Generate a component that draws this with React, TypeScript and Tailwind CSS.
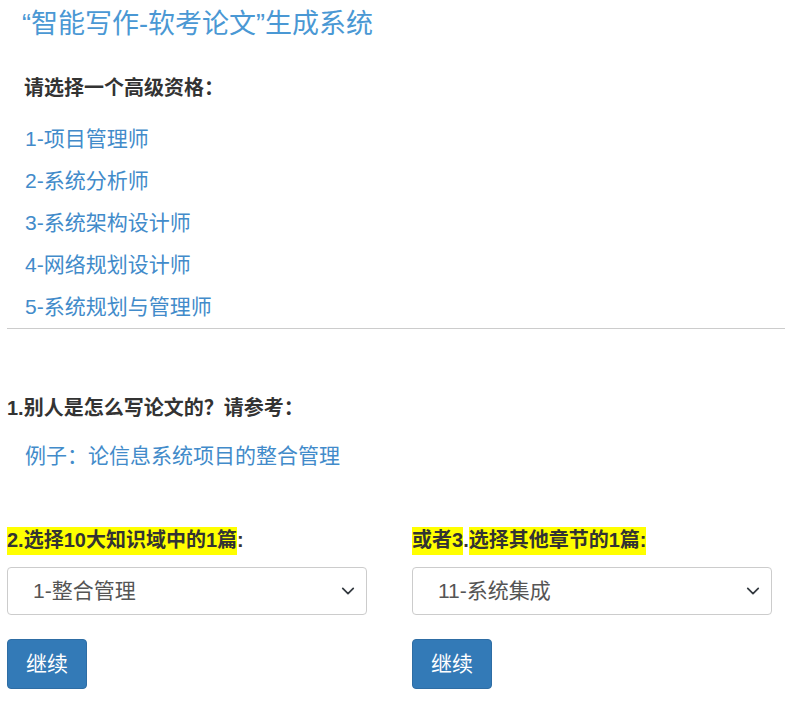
const font = { fontFamily: '"Liberation Sans", "Noto Sans CJK SC", sans-serif' };

const quals = ["1-项目管理师", "2-系统分析师", "3-系统架构设计师", "4-网络规划设计师", "5-系统规划与管理师"];

const Chevron = () => (
  <svg className="pointer-events-none absolute right-[12px] top-1/2 -translate-y-1/2" width="14" height="14" viewBox="0 0 16 16" fill="none">
    <path d="M2 5l6 6 6-6" stroke="#343a40" strokeWidth="2" strokeLinecap="round" strokeLinejoin="round" />
  </svg>
);

const Picker = ({ value, options }: { value: string; options: string[] }) => (
  <div className="relative mt-[14px] w-[360px]">
    <select
      defaultValue={value}
      className="h-[48px] w-full appearance-none rounded-[4px] border border-[#ccc] bg-white pl-[25px] text-[21px] text-[#555] outline-none"
      style={font}
    >
      {options.map((o) => (
        <option key={o}>{o}</option>
      ))}
    </select>
    <Chevron />
  </div>
);

const GoButton = () => (
  <button className="mt-[24px] h-[50px] w-[80px] rounded-[4px] border border-[#2e6da4] bg-[#337ab7] text-[21px] text-white">
    继续
  </button>
);

export default function App() {
  return (
    <div className="min-h-[702px] w-[785px] bg-white px-[7px] text-[#333]" style={font}>
      <div className="px-[15px]">
        <h1 className="pt-[7px] text-[27px] leading-[34px] text-[#4a98d4]">“智能写作-软考论文”生成系统</h1>
        <h3 className="mt-[34px] pl-[2px] text-[20px] font-bold leading-[26px]">请选择一个高级资格：</h3>
        <ul className="mt-[17px] pl-[3px]">
          {quals.map((q) => (
            <li key={q} className="text-[21px] leading-[42px] text-[#428bca]">
              {q}
            </li>
          ))}
        </ul>
      </div>
      <hr className="-mr-[7px] border-t border-[#ccc]" />

      <h3 className="mt-[66px] text-[20px] font-bold leading-[26px]">1.别人是怎么写论文的？请参考：</h3>
      <p className="mt-[14px] pl-[18px] text-[21px] leading-[42px] text-[#428bca]">例子：论信息系统项目的整合管理</p>

      <div className="mt-[50px] flex gap-[45px]">
        <div className="flex w-[360px] flex-col items-start">
          <h4 className="text-[20px] font-bold leading-[26px]">
            <span className="bg-[#ffff00] pt-[2px] pb-[4px]">2.选择10大知识域中的1篇</span>:
          </h4>
          <Picker value="1-整合管理" options={["1-整合管理", "2-范围管理", "3-进度管理", "4-成本管理", "5-质量管理", "6-资源管理", "7-沟通管理", "8-风险管理", "9-采购管理", "10-干系人管理"]} />
          <GoButton />
        </div>
        <div className="flex w-[360px] flex-col items-start">
          <h4 className="text-[20px] font-bold leading-[26px]">
            <span className="bg-[#ffff00] pt-[2px] pb-[4px]">或者3</span>.<span className="bg-[#ffff00] pt-[2px] pb-[4px]">选择其他章节的1篇: </span>
          </h4>
          <Picker value="11-系统集成" options={["11-系统集成", "12-配置管理", "13-变更管理"]} />
          <GoButton />
        </div>
      </div>
    </div>
  );
}
